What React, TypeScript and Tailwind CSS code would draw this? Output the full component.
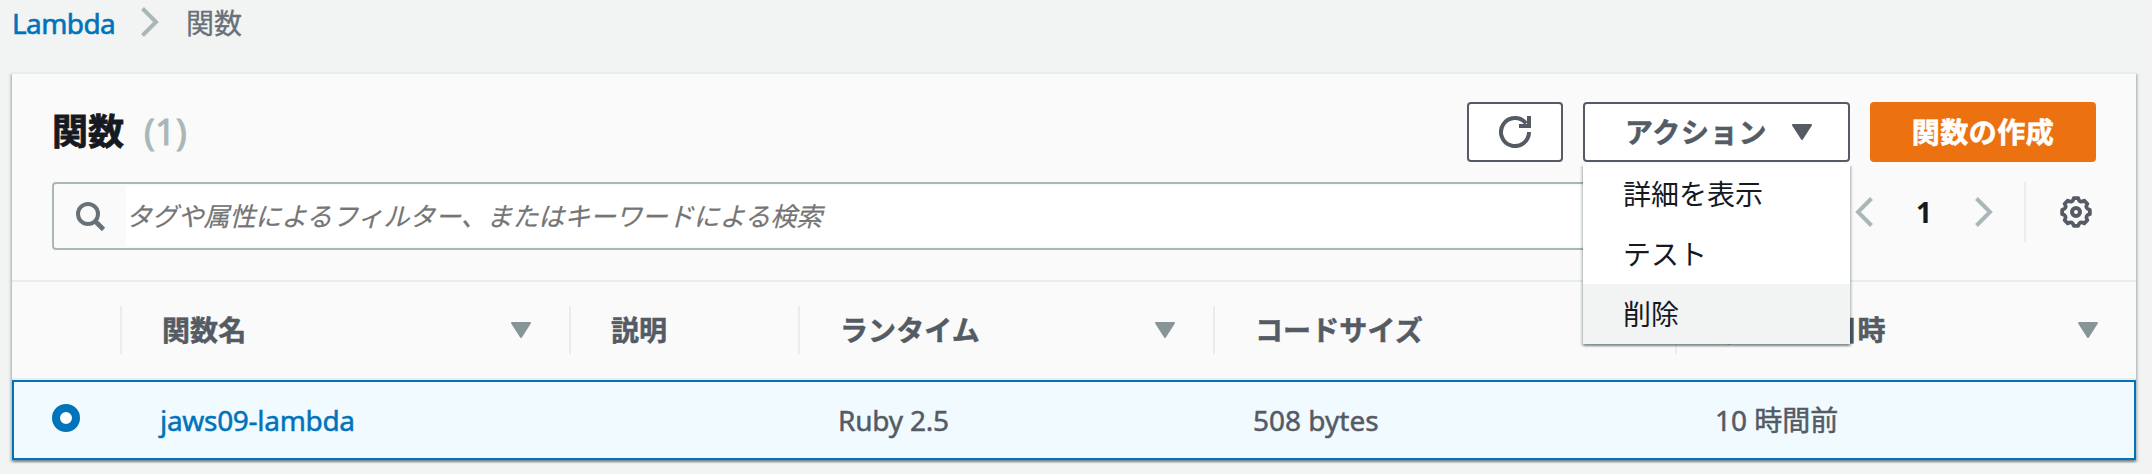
import React from "react";

const shadow =
  "shadow-[0_2px_2px_0_rgba(0,28,36,0.3),2px_2px_2px_0_rgba(0,28,36,0.15),-2px_2px_2px_0_rgba(0,28,36,0.15)]";

function Chevron({ left = false }: { left?: boolean }) {
  return (
    <svg width="18" height="30" viewBox="0 0 18 30" fill="none" className={left ? "rotate-180" : ""}>
      <path d="M1.5 1.5 L15 15 L1.5 28.5" stroke="#aab7b8" strokeWidth="4" />
    </svg>
  );
}

function Caret({ color }: { color: string }) {
  return (
    <svg width="20" height="16" viewBox="0 0 20 16" className="shrink-0">
      <path d="M1 1H19L10 15Z" fill={color} stroke={color} strokeWidth="2" strokeLinejoin="round" />
    </svg>
  );
}

function Gear() {
  const at = (deg: number, r: number) => {
    const a = (deg * Math.PI) / 180;
    return `${(16 + r * Math.cos(a)).toFixed(2)} ${(16 + r * Math.sin(a)).toFixed(2)}`;
  };
  let d = `M${at(-9, 14)}`;
  for (let i = 0; i < 8; i++) {
    const b = i * 45;
    d += `L${at(b + 9, 14)}Q${at(b + 22.5, 9.2)} ${at(b + 36, 14)}`;
  }
  return (
    <svg width="32" height="32" viewBox="0 0 32 32" fill="none" stroke="#545b64">
      <path d={d + "Z"} strokeWidth="3.8" strokeLinejoin="round" />
      <circle cx="16" cy="16" r="4" strokeWidth="4" />
    </svg>
  );
}

const columns = [
  { label: "関数名", caret: true },
  { label: "説明", caret: false },
  { label: "ランタイム", caret: true },
  { label: "コードサイズ", caret: false },
  { label: "最終更新日時", caret: true },
];

const cols = "grid grid-cols-[110px_449px_229px_415px_462px_459px]";

export default function App() {
  return (
    <div className="h-[474px] w-[2152px] overflow-hidden bg-[#f2f3f3] pl-3 pr-4 font-['Noto_Sans','Noto_Sans_CJK_JP',sans-serif] text-[28px] leading-[40px] text-[#545b64]">
      <nav className="flex h-[72px] items-start pt-[3px]">
        <a className="w-[129px] tracking-[-0.6px] text-[#0073bb] [-webkit-text-stroke:0.6px]">Lambda</a>
        <span className="mt-1 w-[46px]">
          <Chevron />
        </span>
        <span className="-ml-px text-[#687078] [-webkit-text-stroke:0.3px]">関数</span>
      </nav>

      <main className={`h-[388px] border-t-2 border-[#eaeded] bg-[#fafafa] ${shadow}`}>
        <header className="h-[208px] border-b-2 border-[#eaeded] pl-10 pr-10 pt-7">
          <div className="flex h-[60px] items-center gap-5">
            <h1 className="mr-auto flex gap-5 text-[36px] leading-[62px]">
              <span className="font-bold text-[#16191f] [-webkit-text-stroke:0.8px]">関数</span>
              <span className="tracking-[0.3px] text-[#aab7b8] [-webkit-text-stroke:1px]">(1)</span>
            </h1>
            <button className="flex h-[60px] w-24 items-center justify-center rounded-[4px] border-2 border-[#545b64] bg-white">
              <svg width="32" height="32" viewBox="0 0 32 32" fill="none" stroke="#545b64" strokeWidth="4">
                <path d="M30 16A14 14 0 1 1 27 7.4" />
                <path d="M30 0V10H20" />
              </svg>
            </button>
            <div className="relative">
              <button className="flex h-[60px] w-[267px] items-center rounded-[4px] border-2 border-[#545b64] bg-white pl-10 font-bold">
                <span className="w-[167px] text-left tracking-[0.7px] [-webkit-text-stroke:0.5px]">アクション</span>
                <Caret color="#545b64" />
              </button>
              <ul className={`absolute left-0 top-[62px] z-10 w-[267px] bg-white text-[#16191f] ${shadow}`}>
                <li className="h-[60px] pl-10 leading-[60px]">詳細を表示</li>
                <li className="h-[60px] pl-10 leading-[60px]">テスト</li>
                <li className="h-[60px] bg-[#f2f3f3] pl-10 leading-[60px]">削除</li>
              </ul>
            </div>
            <button className="h-[60px] w-[226px] rounded-[4px] bg-[#ec7211] font-bold tracking-[0.5px] text-white [-webkit-text-stroke:0.6px]">
              関数の作成
            </button>
          </div>

          <div className="mt-5 flex items-start">
            <div className="flex h-[68px] w-[1760px] items-center rounded-[4px] border-2 border-[#aab7b8] py-0.5">
              <svg width="72" height="60" viewBox="0 0 72 60" fill="none" stroke="#687078">
                <circle cx="34" cy="28" r="10" strokeWidth="4" />
                <path d="M41 35L49.5 43.5" strokeWidth="4.6" />
              </svg>
              <div className="h-[60px] flex-1 bg-white text-[26px] italic leading-[60px] tracking-[-0.13px] text-[#757575] [-webkit-text-stroke:0.2px]">
                タグや属性によるフィルター、またはキーワードによる検索
              </div>
            </div>
            <div className="ml-[43px] flex h-[60px] items-center">
              <Chevron left />
              <span className="w-[102px] text-center font-bold text-[#16191f]">1</span>
              <Chevron />
              <span className="ml-[31px] mr-[34px] h-[60px] w-0.5 bg-[#eaeded]" />
              <Gear />
            </div>
          </div>
        </header>

        <div className={`${cols} h-[98px] items-center border-b-2 border-[#eaeded]`}>
          <div className="h-12 border-r-2 border-[#eaeded]" />
          {columns.map((c, i) => (
            <div
              key={c.label}
              className={`flex h-12 items-center justify-between pl-10 pr-[38px] font-bold ${
                i < 4 ? "border-r-2 border-[#eaeded]" : ""
              }`}
            >
              <span className="tracking-[0.1px] [-webkit-text-stroke:0.5px]">{c.label}</span>
              {c.caret && <Caret color="#879596" />}
            </div>
          ))}
        </div>

        <div className="h-20 border-2 border-[#0073bb] bg-[#f1faff]">
          <div className={`${cols} -mx-0.5 h-[76px] items-center [-webkit-text-stroke:0.5px]`}>
            <span className="mb-1 ml-10 size-7 rounded-full border-8 border-[#0073bb] bg-white" />
            <a className="pl-[38px] tracking-[-0.3px] text-[#0073bb]">jaws09-lambda</a>
            <span />
            <span className="pl-[38px] tracking-[-0.2px]">Ruby 2.5</span>
            <span className="pl-[38px]">508 bytes</span>
            <span className="pl-[38px]">10 時間前</span>
          </div>
        </div>
      </main>
    </div>
  );
}
